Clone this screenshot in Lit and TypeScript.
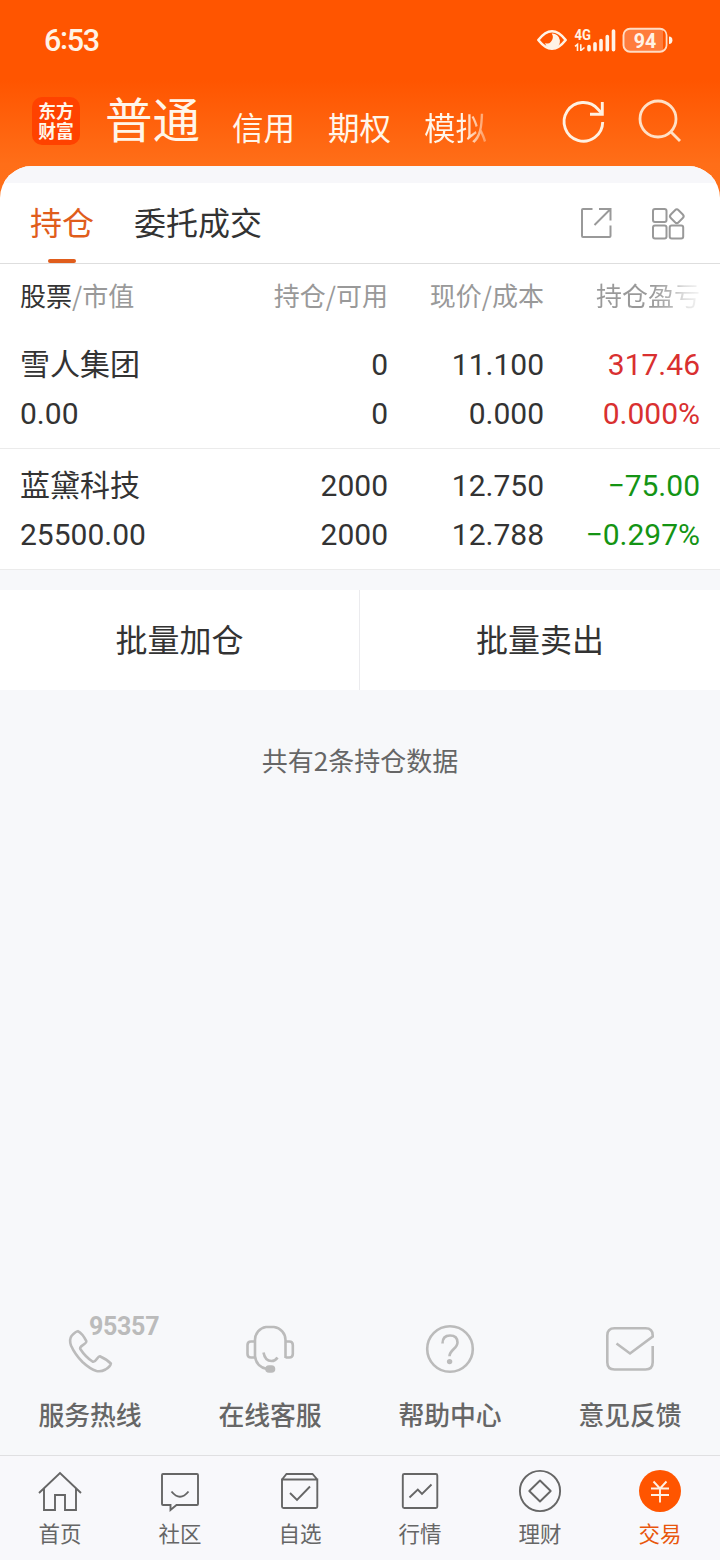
import { LitElement, html, css, svg } from "lit";
import { customElement } from "lit/decorators.js";

const cjk = css`"Noto Sans CJK SC", sans-serif`;

interface Holding {
  name: string;
  value: string;
  held: string;
  usable: string;
  price: string;
  cost: string;
  profit: string;
  rate: string;
  trend: "up" | "down";
}

const holdings: Holding[] = [
  { name: "雪人集团", value: "0.00", held: "0", usable: "0", price: "11.100", cost: "0.000", profit: "317.46", rate: "0.000%", trend: "up" },
  { name: "蓝黛科技", value: "25500.00", held: "2000", usable: "2000", price: "12.750", cost: "12.788", profit: "−75.00", rate: "−0.297%", trend: "down" },
];

@customElement("status-bar")
class StatusBar extends LitElement {
  static styles = css`
    :host { display: flex; height: 80px; box-sizing: border-box; padding: 0 46px 0 44px; align-items: center; color: #fff3e6; font-family: Roboto, sans-serif; }
    .time { flex: 1; font-size: 30.5px; font-weight: 500; line-height: 40px; letter-spacing: -1.3px; padding-top: 2px; }
    .colon { display: inline-block; transform: translateY(-2px); }
    .icons { display: block; }
    .net { font: 700 14.5px Roboto, sans-serif; fill: #fff3e6; }
    .level { font: 700 21px Roboto, sans-serif; fill: #fff3e6; }
  `;
  render() {
    return html`
      <span class="time">6<span class="colon">:</span>53</span>
      <svg class="icons" width="140" height="40" viewBox="534 20 140 40" fill="#fff3e6">
        <path d="M538.3 40Q552 22.5 565.7 40Q552 57.500 538.3 40Z" fill="none" stroke="#fff3e6" stroke-width="2.500" stroke-linejoin="round"/>
        <path d="M551.800 33.600A7.600 7.600 0 1 1 545 43Q548.500 44.500 550.800 42Q554.300 38 551.800 33.600Z"/>
        <text class="net" x="574.500" y="39.700" textLength="16.500" lengthAdjust="spacingAndGlyphs">4G</text>
        <path d="M575 46.300L577.500 44.300V51M580.800 44.300V51M581 50.500L584.500 47.500" fill="none" stroke="#fff3e6" stroke-width="1.600"/>
        <path d="M589 46.500V49.700M595 43.700V49.700M601 40.500V49.700M607.300 36.500V49.700M613.500 31V49.700" fill="none" stroke="#fff3e6" stroke-width="3.600" stroke-linecap="round"/>
        <rect x="623.500" y="28.700" width="43" height="23" rx="6.500" fill="#ff7c3c" stroke="#ffdcc4" stroke-width="1.900"/>
        <path d="M663 30.500q2.500 1 2.500 5v9q0 4-2.500 5z" fill="#ff5500"/>
        <path d="M669 36.500q3.400 0 3.400 3.700t-3.400 3.700z"/>
        <text class="level" x="633.800" y="47.900" textLength="22.500" lengthAdjust="spacingAndGlyphs">94</text>
      </svg>
    `;
  }
}

@customElement("account-header")
class AccountHeader extends LitElement {
  static styles = css`
    :host { display: flex; height: 86px; box-sizing: border-box; padding: 0 36px 0 32px; color: #fff6ea; font-family: ${cjk}; }
    .logo { width: 48px; height: 48px; margin-top: 17px; box-sizing: border-box; padding: 3px 6px 0; border-radius: 10px; background: #ff4200; text-align: center; font-size: 17.8px; line-height: 20px; font-weight: 700; word-break: break-all; }
    .tabs { display: flex; flex: 1; align-items: baseline; margin-left: 25px; white-space: nowrap; }
    .main { font-size: 47.500px; line-height: 76px; font-weight: 400; width: 127px; }
    .tab { font-size: 31.500px; width: 96px; font-weight: 400; padding-top: 2px; transform: translateY(2px); }
    .fade { color: transparent; background: linear-gradient(90deg, #fff6ea 40px, #ff9a5e 62px, #ff6f1e 70px); background-clip: text; -webkit-background-clip: text; }
    .actions { display: block; margin-top: 14px; }
  `;
  render() {
    return html`
      <div class="logo">东方财富</div>
      <nav class="tabs">
        <span class="main">普通</span><span class="tab">信用</span><span class="tab">期权</span><span class="tab fade">模拟</span>
      </nav>
      <svg class="actions" width="124" height="56" viewBox="560 94 124 56" fill="none">
        <path d="M602.700 122A19.300 19.300 0 1 1 598 109.200L602 113.500" stroke="#fff1e2" stroke-width="2.900"/>
        <path d="M602.300 102V114.300H590" stroke="#fff1e2" stroke-width="2.900"/>
        <circle cx="658" cy="119" r="18" stroke="#ffe0c6" stroke-width="2.800"/>
        <path d="M670.500 131.500L680 141" stroke="#ffe0c6" stroke-width="2.900"/>
      </svg>
    `;
  }
}

@customElement("holdings-panel")
class HoldingsPanel extends LitElement {
  static styles = css`
    :host { display: block; overflow: hidden; border-radius: 32px 32px 0 0; background: #fff; font-family: ${cjk}; color: #333; }
    .strip { height: 17px; background: #f7f7fa; }
    .tabs { display: flex; height: 80px; padding: 0 34px 0 30px; border-bottom: 1px solid #dedede; font-size: 32px; line-height: 77px; }
    .tab { margin-right: 40px; }
    .active { display: flex; flex-direction: column; align-items: center; color: #e05d1c; }
    .active .label { height: 76px; }
    .bar { width: 28px; height: 4px; border-radius: 2px; background: #e05d1c; }
    .grow { flex: 1; }
    .tools { display: block; margin-top: 20px; }
    .row { display: grid; grid-template-columns: 188px 180px 156px 156px; padding: 0 20px; }
    .cell { text-align: right; }
    .left { text-align: left; }
    .head { height: 64px; font-size: 26px; line-height: 62px; color: #999; white-space: nowrap; }
    .dark { color: #333; }
    .fade { color: transparent; background: linear-gradient(90deg, #999 108px, #b8b8b8 128px, #dedede 140px, #f4f4f4 156px); background-clip: text; -webkit-background-clip: text; }
    .item { height: 120px; box-sizing: content-box; border-bottom: 1px solid #ebebeb; grid-template-rows: 49px 49px; }
    .num { font-family: Roboto, sans-serif; font-size: 30px; line-height: 74px; }
    .name { font-size: 30px; line-height: 69px; }
    .up { color: #d93030; }
    .down { color: #149414; }
  `;
  render() {
    return html`
      <div class="strip"></div>
      <div class="tabs">
        <div class="tab active"><span class="label">持仓</span><span class="bar"></span></div>
        <div class="tab">委托成交</div>
        <span class="grow"></span>
        <svg class="tools" width="108" height="40" viewBox="578 203 108 40" fill="none" stroke="#999" stroke-width="2">
          <path d="M592.500 209H583q-1 0-1 1v26q0 1 1 1h26.500q1 0 1-1v-10.500M599 209h11.500v11.500M610 209.500L594.500 225"/>
          <rect x="653" y="209" width="13.500" height="13" rx="2"/>
          <rect x="653" y="225.500" width="13.500" height="13" rx="2"/>
          <rect x="669.700" y="225.500" width="13.500" height="13" rx="2"/>
          <rect x="671.300" y="210.700" width="11" height="11" rx="2.500" transform="rotate(45 676.800 216.200)"/>
        </svg>
      </div>
      <div class="row head">
        <span class="cell left"><span class="dark">股票</span>/市值</span>
        <span class="cell">持仓/可用</span>
        <span class="cell">现价/成本</span>
        <span class="cell fade">持仓盈亏</span>
      </div>
      ${holdings.map(
        (h) => html`
          <div class="row item">
            <span class="cell left name">${h.name}</span>
            <span class="cell num">${h.held}</span>
            <span class="cell num">${h.price}</span>
            <span class="cell num ${h.trend}">${h.profit}</span>
            <span class="cell left num">${h.value}</span>
            <span class="cell num">${h.usable}</span>
            <span class="cell num">${h.cost}</span>
            <span class="cell num ${h.trend}">${h.rate}</span>
          </div>
        `
      )}
    `;
  }
}

@customElement("service-links")
class ServiceLinks extends LitElement {
  static styles = css`
    :host { display: grid; grid-template-columns: repeat(4, 180px); height: 145px; font-family: ${cjk}; }
    .link { display: flex; flex-direction: column; align-items: center; }
    .icon { display: block; }
    .label { font-size: 25.8px; font-weight: 500; line-height: 38px; margin-top: 3px; color: #666; }
    .hotline { font: 700 25px Roboto, sans-serif; fill: #bbb; stroke: none; }
  `;
  render() {
    const icons = [
      { label: "服务热线", x: 0, art: svg`<text class="hotline" x="89" y="1335" textLength="70.500" lengthAdjust="spacing">95357</text>
        <path d="M77.800 1331.200Q75.500 1331.500 71.500 1336Q69 1339.500 71 1345.500Q75 1354.500 82.500 1362Q90 1369 96.500 1371Q101 1372 105.500 1369.500Q110.500 1366.500 110.800 1363.500Q107 1359.500 99.800 1356.200Q98.800 1356.200 97 1358.800Q94.500 1362.500 92.500 1361.500Q85.500 1357 80.300 1349Q79.500 1347.300 82.500 1345.300Q86.800 1342.500 86.300 1341.200Q82.500 1333.500 77.800 1331.200Z"/>` },
      { label: "在线客服", x: 180, art: svg`<path d="M255 1342V1340A13 13 0 0 1 266 1327H274A13 13 0 0 1 285.500 1340V1358M255 1340V1356Q256 1366.500 267 1369"/>
        <path d="M255 1341.500h-4q-3.500 0-3.500 3.500v9q0 3.500 3.500 3.500h4M285.500 1341.500h3.800q3.500 0 3.500 3.500v9q0 3.500-3.500 3.500h-3.800M263.500 1352.500q1.500 8.500 8 8.500q4 0 6-3.500"/>
        <rect x="266.500" y="1366.500" width="7.500" height="5" rx="2.500" fill="#bbb"/>` },
      { label: "帮助中心", x: 360, art: svg`<circle cx="450" cy="1349" r="22.800"/>
        <path d="M442.500 1343.500Q442.500 1335.500 450 1335.500Q457.500 1335.500 457.500 1342.500Q457.500 1345.500 453.500 1349.300Q449.500 1353 449.500 1356.300"/>
        <circle cx="449.600" cy="1361.600" r="2.700" fill="#bbb" stroke="none"/>` },
      { label: "意见反馈", x: 540, art: svg`<path d="M616.500 1343.500L630 1353.500L652.700 1336.500V1335.500Q652.700 1328.300 645.500 1328.300H614.500Q607.300 1328.300 607.300 1335.500V1362.300Q607.300 1369.500 614.500 1369.500H645.500Q652.700 1369.500 652.700 1362.300V1346"/>` },
    ];
    return html`${icons.map(
      (i) => html`
        <div class="link">
          <svg class="icon" width="180" height="82" viewBox="${i.x} 1310 180 82" fill="none" stroke="#bbb" stroke-width="2.600">${i.art}</svg>
          <span class="label">${i.label}</span>
        </div>
      `
    )}`;
  }
}

@customElement("bottom-nav")
class BottomNav extends LitElement {
  static styles = css`
    :host { display: grid; grid-template-columns: repeat(6, 120px); height: 105px; box-sizing: border-box; border-top: 1px solid #e0e0e2; background: #f8f8fb; font-family: ${cjk}; }
    .item { display: flex; flex-direction: column; align-items: center; color: #666; }
    .icon { display: block; margin-top: 8px; }
    .label { font-size: 21.500px; line-height: 30px; }
    .active { color: #e8560c; }
  `;
  render() {
    const items = [
      { label: "首页", x: 0, art: svg`<path d="M39 1493L60 1473L81 1493M44 1488.500V1510H55V1495H65V1510H76V1488.500"/>` },
      { label: "社区", x: 120, art: svg`<path d="M163 1474H197q1 0 1 1v29q0 1-1 1H176.500L170.500 1510V1505H163q-1 0-1-1v-29q0-1 1-1ZM171.500 1491.500q8.500 10.500 17 0"/>` },
      { label: "自选", x: 240, art: svg`<path d="M282 1479.500L286.500 1474H312.500L317.300 1479.500M282 1479.500H317.300V1506.500q0 1.500-1.500 1.500H283.500q-1.500 0-1.500-1.500ZM290 1493L297 1500L310 1486.500"/>` },
      { label: "行情", x: 360, art: svg`<rect x="402.800" y="1474" width="34.500" height="34" rx="1.500"/><path d="M409.500 1497.500L417.800 1489.500L422 1494L431.500 1484.500"/>` },
      { label: "理财", x: 480, art: svg`<circle cx="540" cy="1491" r="20.100"/><path d="M540 1480.500L550.700 1491L540 1501.500L529.300 1491Z" stroke-linejoin="round"/>` },
      { label: "交易", x: 600, art: svg`<circle cx="660" cy="1491" r="21" fill="#ff5500" stroke="none"/><path d="M653.500 1481.500L660 1488.500L666.500 1481.500M651 1488.500H669M651 1495H669M660 1488.500V1502.500" stroke="#fff0e2"/>` },
    ];
    return html`${items.map(
      (i) => html`
        <div class="item ${i.x === 600 ? "active" : ""}">
          <svg class="icon" width="120" height="54" viewBox="${i.x} 1464 120 54" fill="none" stroke="#666" stroke-width="1.900">${i.art}</svg>
          <span class="label">${i.label}</span>
        </div>
      `
    )}`;
  }
}

@customElement("app-root")
class AppRoot extends LitElement {
  static styles = css`
    :host { display: flex; flex-direction: column; width: 720px; height: 1560px; overflow: hidden; background: linear-gradient(180deg, #ff5500 80px, #ff6e18 164px, #ff7019 200px, #f7f8fa 200px); font-family: ${cjk}; }
    .batch { display: grid; grid-template-columns: 359px 1fr; margin-top: 20px; height: 100px; background: #fff; color: #333; font-size: 32px; line-height: 97px; text-align: center; }
    .sell { border-left: 1px solid #ebebee; }
    .count { flex: 1; padding-top: 51px; text-align: center; font-size: 26px; line-height: 38px; color: #666; }
  `;
  render() {
    return html`
      <status-bar></status-bar>
      <account-header></account-header>
      <holdings-panel></holdings-panel>
      <div class="batch"><span>批量加仓</span><span class="sell">批量卖出</span></div>
      <div class="count">共有2条持仓数据</div>
      <service-links></service-links>
      <bottom-nav></bottom-nav>
    `;
  }
}
